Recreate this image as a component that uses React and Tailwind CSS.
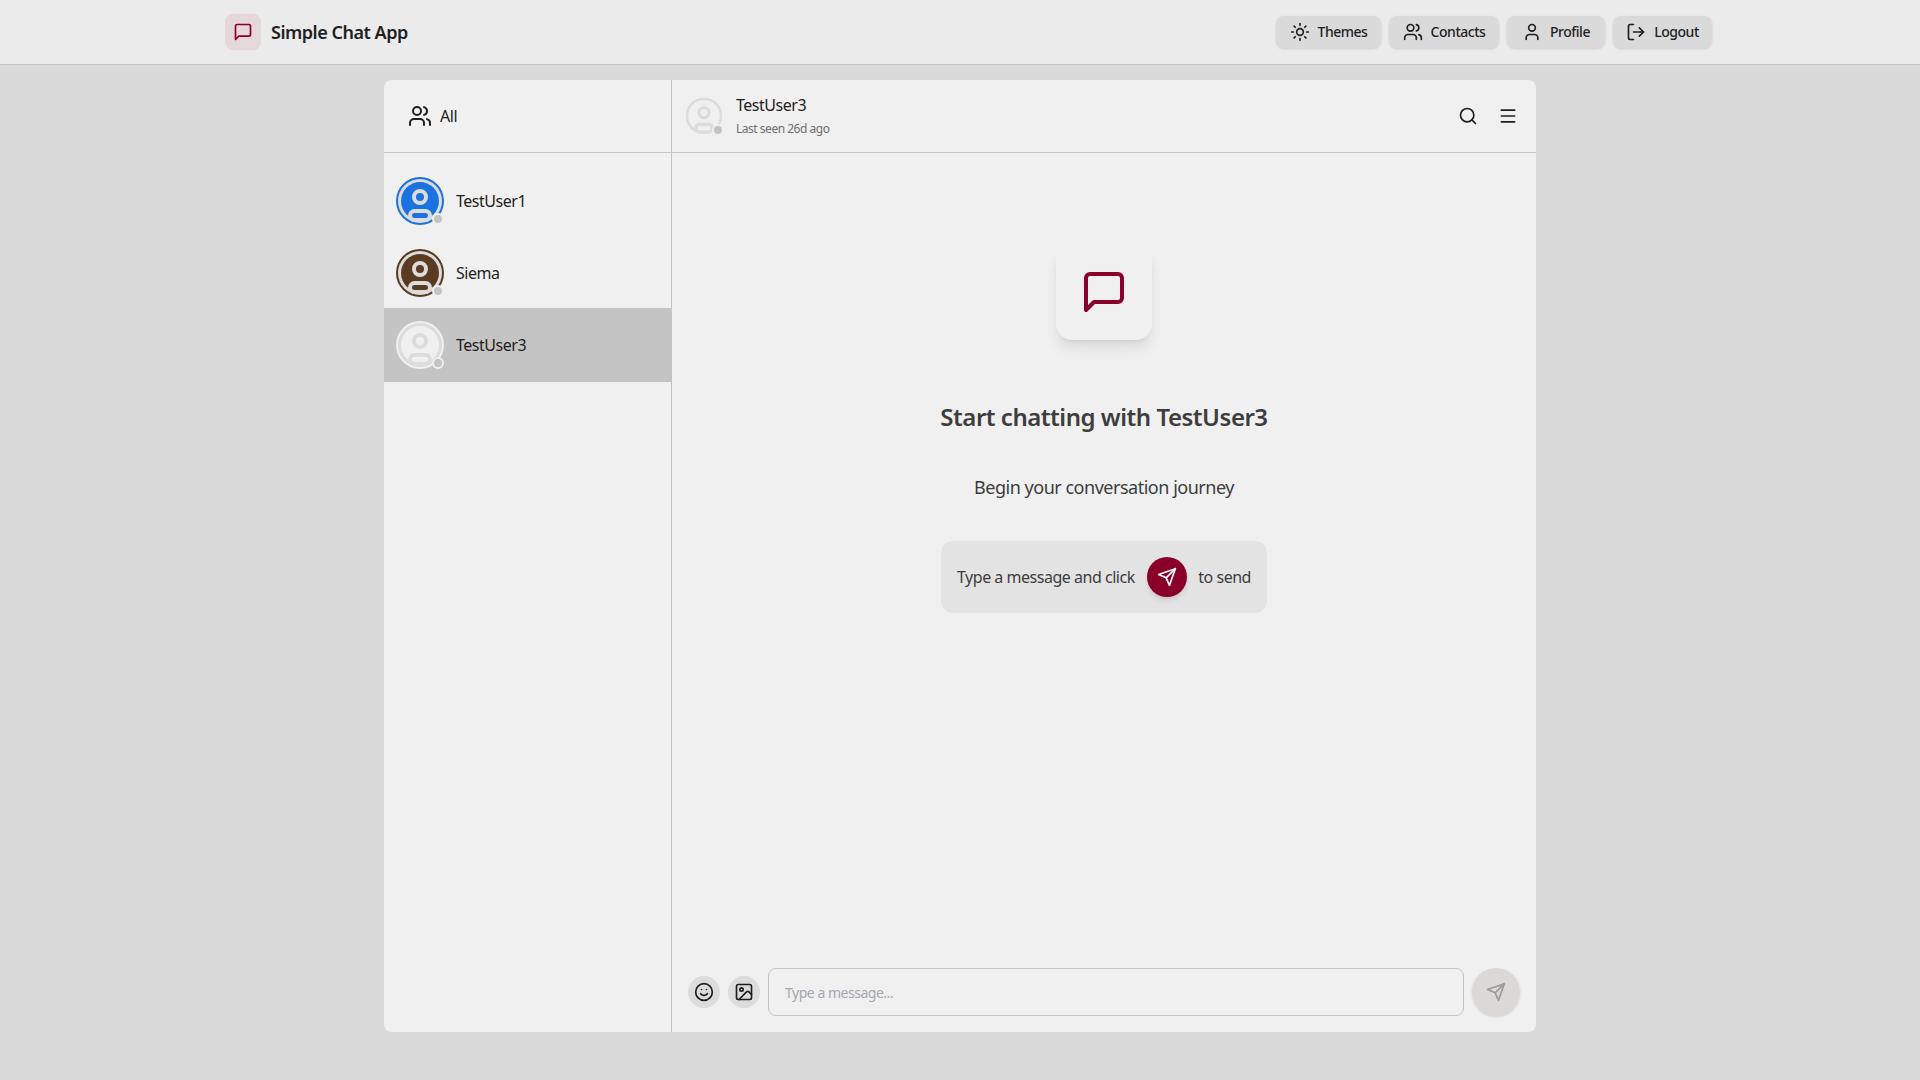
import React from "react";
import { Sun, Users, User, LogOut, Search, Menu, Smile, Image } from "lucide-react";

function ChatIcon({ className }) {
  return (
    <svg viewBox="0 0 24 24" fill="none" stroke="currentColor" strokeWidth="2" strokeLinecap="round" strokeLinejoin="round" className={className}>
      <path d="M21 15a2 2 0 0 1-2 2H7l-4 4V5a2 2 0 0 1 2-2h14a2 2 0 0 1 2 2z" />
    </svg>
  );
}

function SendIcon({ className }) {
  return (
    <svg viewBox="0 0 24 24" fill="none" stroke="currentColor" strokeWidth="2" strokeLinecap="round" strokeLinejoin="round" className={className}>
      <path d="m22 2-7 20-4-9-9-4Z" />
      <path d="M22 2 11 13" />
    </svg>
  );
}

function Avatar({ fill, ring, size }) {
  return (
    <div className={`relative shrink-0 ${size}`}>
      <svg viewBox="0 0 48 48" className="w-full h-full">
        <circle cx="24" cy="24" r="24" fill={ring} />
        <circle cx="24" cy="24" r="22" fill="#dcdcdc" />
        <circle cx="24" cy="24" r="19" fill={fill} />
        <circle cx="24" cy="20" r="6" fill="none" stroke="#dcdcdc" strokeWidth="4" />
        <rect x="14" y="34" width="20" height="9" rx="4.5" fill={fill} stroke="#dcdcdc" strokeWidth="4" />
      </svg>
      <span className="absolute bottom-0 right-0 w-3 h-3 rounded-full bg-[#c4c4c4] border-2 border-[#f0f0f0]" />
    </div>
  );
}

const navButtons = [
  { label: "Themes", icon: Sun, width: "w-[105px]" },
  { label: "Contacts", icon: Users, width: "w-[110px]" },
  { label: "Profile", icon: User, width: "w-[98px]" },
  { label: "Logout", icon: LogOut, width: "w-[99px]" },
];

const users = [
  { name: "TestUser1", fill: "#1a73e0", ring: "#1a73e0" },
  { name: "Siema", fill: "#5a3a20", ring: "#5a3a20" },
  { name: "TestUser3", fill: "#f0f0f0", ring: "#f0f0f0", selected: true },
];

export default function App() {
  return (
    <div className="h-screen flex flex-col bg-[#dadada] text-[#1f1f1f] font-['Noto_Sans',sans-serif] tracking-[-0.03em] overflow-hidden">
      <header className="h-[65px] shrink-0 bg-[#ebebeb] border-b border-[#c4c4c4]">
        <div className="h-full max-w-[1536px] mx-auto pl-[33px] pr-4 flex items-center justify-between">
          <div className="flex items-center gap-2.5">
            <div className="w-9 h-9 rounded-lg bg-[#e6d7db] flex items-center justify-center">
              <ChatIcon className="w-5 h-5 text-[#8a0029]" />
            </div>
            <h1 className="text-lg font-semibold">Simple Chat App</h1>
          </div>
          <div className="flex items-center gap-2">
            {navButtons.map((btn) => (
              <button key={btn.label} className={`h-8 flex items-center justify-center gap-2 rounded-lg bg-[#dadada] shadow-sm text-sm font-medium ${btn.width}`}>
                <btn.icon className="w-5 h-5" />
                {btn.label}
              </button>
            ))}
          </div>
        </div>
      </header>

      <main className="flex-1 pt-[15px] flex justify-center">
        <div className="w-[1152px] h-[952px] flex rounded-lg bg-[#f0f0f0] overflow-hidden">
          <aside className="w-72 shrink-0 border-r border-[#c4c4c4] flex flex-col">
            <div className="h-[73px] shrink-0 border-b border-[#c4c4c4] pl-6 flex items-center gap-2">
              <Users className="w-6 h-6" />
              <span>All</span>
            </div>
            <div className="py-3">
              {users.map((u) => (
                <div key={u.name} className={`px-3 flex items-center gap-3 ${u.selected ? "h-[74px] -mt-px bg-[#c4c4c4]" : "h-[72px]"}`}>
                  <Avatar fill={u.fill} ring={u.ring} size="w-12 h-12" />
                  <span>{u.name}</span>
                </div>
              ))}
            </div>
          </aside>

          <section className="flex-1 flex flex-col">
            <div className="h-[73px] shrink-0 border-b border-[#c4c4c4] pl-3 pr-2.5 flex items-center justify-between">
              <div className="flex items-center gap-3">
                <Avatar fill="#f0f0f0" ring="#f0f0f0" size="w-10 h-10" />
                <div className="pb-[3px]">
                  <div className="leading-6 mb-1">TestUser3</div>
                  <div className="text-xs text-[#6f6f6f] leading-4">Last seen 26d ago</div>
                </div>
              </div>
              <div className="flex items-center gap-1">
                <button className="w-9 h-9 flex items-center justify-center"><Search className="w-5 h-5" /></button>
                <button className="w-9 h-9 flex items-center justify-center"><Menu className="w-5 h-5" /></button>
              </div>
            </div>

            <div className="flex-1 flex flex-col items-center pt-[91px] text-[#3d3d3d]">
              <div className="w-24 h-24 rounded-2xl bg-[#f0f0f0] shadow-lg flex items-center justify-center">
                <ChatIcon className="w-12 h-12 text-[#8a0029]" />
              </div>
              <h2 className="mt-[61px] text-2xl font-semibold leading-8">Start chatting with TestUser3</h2>
              <p className="mt-10 text-lg leading-7">Begin your conversation journey</p>
              <div className="mt-10 w-[326px] h-[72px] px-4 flex items-center justify-between rounded-xl bg-[#e3e3e3]">
                <span>Type a message and click</span>
                <span className="w-10 h-10 rounded-full bg-[#8a0029] shadow-md flex items-center justify-center">
                  <SendIcon className="w-5 h-5 text-white" />
                </span>
                <span>to send</span>
              </div>
            </div>

            <div className="p-4 flex items-center gap-2">
              <button className="w-8 h-8 rounded-full bg-[#dcdcdc] flex items-center justify-center"><Smile className="w-5 h-5" /></button>
              <button className="w-8 h-8 rounded-full bg-[#dcdcdc] flex items-center justify-center"><Image className="w-5 h-5" /></button>
              <input placeholder="Type a message..." className="flex-1 h-12 px-4 rounded-lg border border-[#c4c4c4] bg-transparent text-sm placeholder:text-[#a3a8b2] outline-none" />
              <button className="w-12 h-12 rounded-full bg-[#dcd8d6] shadow-sm flex items-center justify-center">
                <SendIcon className="w-5 h-5 text-[#9a9a9a]" />
              </button>
            </div>
          </section>
        </div>
      </main>
    </div>
  );
}
